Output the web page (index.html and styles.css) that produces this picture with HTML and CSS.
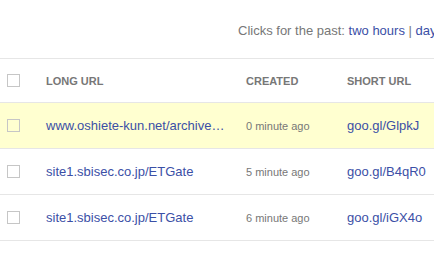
FILE: index.html
```
<!DOCTYPE html>
<html>
<head>
    <meta charset="UTF-8">
    <title>Links</title>
    <link rel="stylesheet" href="styles.css">
</head>
<body>

	<div class="page">
	    <div class="toolbar">
	        Clicks for the past: <a href="">two hours</a> | <a href="">day</a>
	    </div>

	    <div class="url_table">
	        <div class="url_row head_row">
	            <span class="cell"><span class="box"></span></span>
	            <span class="cell">LONG URL</span>
	            <span class="cell">CREATED</span>
	            <span class="cell">SHORT URL</span>
	        </div>
	        <div class="url_row new_row">
	            <span class="cell"><span class="box"></span></span>
	            <span class="cell long_url"><a href="">www.oshiete-kun.net/archive…</a></span>
	            <span class="cell created">0 minute ago</span>
	            <span class="cell"><a href="">goo.gl/GlpkJ</a></span>
	        </div>
	        <div class="url_row">
	            <span class="cell"><span class="box"></span></span>
	            <span class="cell long_url"><a href="">site1.sbisec.co.jp/ETGate</a></span>
	            <span class="cell created">5 minute ago</span>
	            <span class="cell"><a href="">goo.gl/B4qR0</a></span>
	        </div>
	        <div class="url_row">
	            <span class="cell"><span class="box"></span></span>
	            <span class="cell long_url"><a href="">site1.sbisec.co.jp/ETGate</a></span>
	            <span class="cell created">6 minute ago</span>
	            <span class="cell"><a href="">goo.gl/iGX4o</a></span>
	        </div>
	    </div>
	</div>

</body>
</html>
```

FILE: styles.css
```
*{
    margin: 0;
    padding: 0;
}
body{
    overflow: hidden;
    background: #fff;
    font-family: "Liberation Sans", Arial, sans-serif;
    font-size: 13px;
    color: #777;
}
a{
    color: #3b4fa6;
    text-decoration: none;
}
.page{
    width: 560px;
}
.toolbar{
    height: 58px;
    line-height: 61px;
    padding-left: 238px;
    white-space: nowrap;
    border-bottom: 1px solid #e6e6e6;
}
.url_row{
    display: grid;
    grid-template-columns: 46px 200px 101px 1fr;
    align-items: center;
    height: 45px;
    border-bottom: 1px solid #e6e6e6;
}
.head_row{
    height: 43px;
    font-size: 11px;
    font-weight: bold;
}
.new_row{
    background: #ffffd0;
}
.cell{
    display: flex;
    align-items: center;
    white-space: nowrap;
}
.box{
    display: inline-block;
    width: 11px;
    height: 11px;
    margin-left: 7px;
    border: 1px solid #c6c6c6;
    background: #fff;
}
.new_row .box{
    background: transparent;
}
.created{
    font-size: 11px;
}
```
